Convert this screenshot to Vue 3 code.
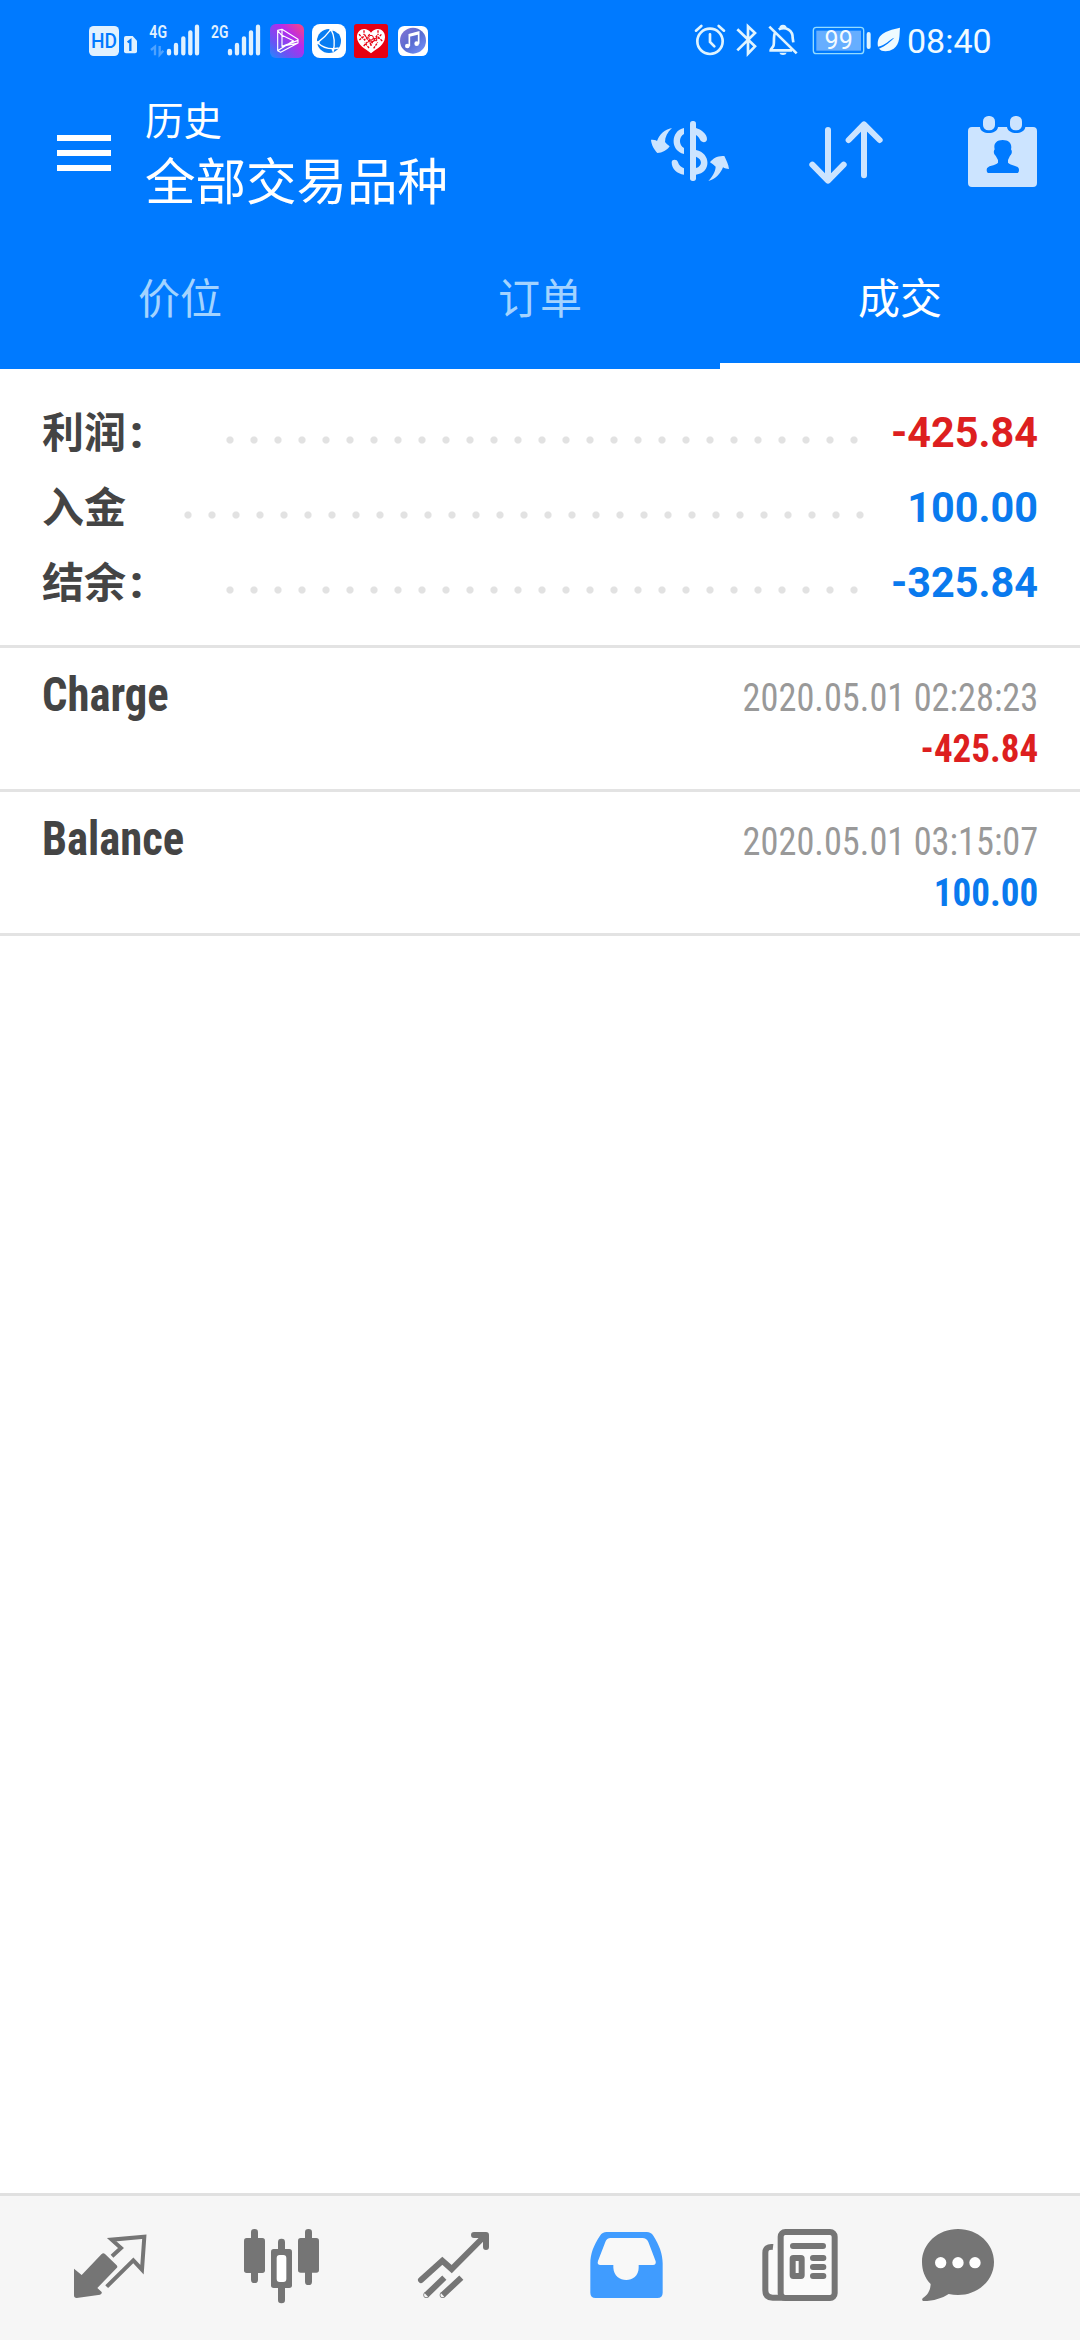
<script setup>
const tabs = [
  { label: '价位', active: false },
  { label: '订单', active: false },
  { label: '成交', active: true },
]
const summary = [
  { label: '利润', colon: true, value: '-425.84', tone: 'red', labelWidth: 176, dots: 27 },
  { label: '入金', colon: false, value: '100.00', tone: 'blue', labelWidth: 134, dots: 29 },
  { label: '结余', colon: true, value: '-325.84', tone: 'blue', labelWidth: 176, dots: 27 },
]
const deals = [
  { name: 'Charge', time: '2020.05.01 02:28:23', value: '-425.84', tone: 'red' },
  { name: 'Balance', time: '2020.05.01 03:15:07', value: '100.00', tone: 'blue' },
]
</script>

<template>
  <div class="screen">
    <header class="top">
      <div class="status">
        <div class="status-group">
          <svg width="70" height="80" viewBox="0 0 210 240">
            <rect x="57" y="78" width="90" height="90" rx="14" fill="#e0f1ff" />
            <text x="102" y="144" class="svg-text" font-size="60" font-weight="500" fill="#007aff" text-anchor="middle" textLength="78" lengthAdjust="spacingAndGlyphs">HD</text>
            <path d="M168 108h20l13 14v32q0 6-6 6h-27q-6 0-6-6v-40q0-6 6-6z" fill="#e0f1ff" />
            <path d="M173 127l8-6v32" stroke="#007aff" stroke-width="7" fill="none" />
          </svg>
          <svg width="65" height="80" viewBox="210 0 195 240">
            <text x="238" y="113" class="svg-text" font-size="54" font-weight="600" fill="#e0f1ff" textLength="53" lengthAdjust="spacingAndGlyphs">4G</text>
            <path d="M243 150l12-10v26M269 138v26l11-12" stroke="#4da2ff" stroke-width="7" fill="none" />
            <path d="M297 153v7M318 135v25M340 115v45M361 97v63M381 80v80" stroke="#e0f1ff" stroke-width="13" stroke-linecap="round" />
          </svg>
          <svg width="60" height="80" viewBox="405 0 180 240">
            <text x="423" y="113" class="svg-text" font-size="54" font-weight="600" fill="#e0f1ff" textLength="52" lengthAdjust="spacingAndGlyphs">2G</text>
            <path d="M480 153v7M501 135v25M522 115v45M543 97v63M564 80v80" stroke="#e0f1ff" stroke-width="13" stroke-linecap="round" />
          </svg>
          <svg width="43" height="80" viewBox="585 0 129 240">
            <defs>
              <linearGradient id="video" x1="0" y1="1" x2="1" y2="0">
                <stop offset="0" stop-color="#1e8cff" /><stop offset=".28" stop-color="#6755f4" />
                <stop offset=".65" stop-color="#b72bea" /><stop offset="1" stop-color="#ff467a" />
              </linearGradient>
            </defs>
            <rect x="600" y="72" width="102" height="102" rx="17" fill="url(#video)" />
            <path d="M623 91v61l9 5 52-28v-11l-48-30zM636 88v51l48-18M636 106l34 16-47 30M623 92l13 15M636 139l48-10" fill="none" stroke="#fff" stroke-width="3.5" stroke-linejoin="round" />
          </svg>
          <svg width="42" height="80" viewBox="714 0 126 240">
            <rect x="726" y="72" width="102" height="102" rx="24" fill="#fff" />
            <circle cx="777" cy="123" r="36" fill="#087df2" />
            <path d="M743 128Q764 113 783 88M743 128Q768 152 806 144M783 88Q799 118 789 156M806 100Q796 90 783 88" fill="none" stroke="#fff" stroke-width="4" />
            <g fill="#fff"><circle cx="744" cy="128" r="5" /><circle cx="783" cy="89" r="5" /><circle cx="789" cy="149" r="4" /></g>
          </svg>
          <svg width="43" height="80" viewBox="840 0 129 240">
            <rect x="852" y="72" width="102" height="102" rx="8" fill="#e60012" />
            <path d="M903 98C888 78 860 87 861 112C862 135 885 146 903 160C921 146 944 135 945 112C946 87 918 78 903 98z" fill="#fff" />
            <path d="M867 103l17 17 14-16 20 18 17-20M868 120l17-14 17 27 18-25 17 15M881 138l16-17 10 7 17-19M897 144l-13-16M911 145l12-18M882 91v14M924 91v14M903 111v30" fill="none" stroke="#e60012" stroke-width="4" stroke-dasharray="7 3" />
            <circle cx="903" cy="113" r="7" fill="#fff" stroke="#e60012" stroke-width="3" />
          </svg>
          <svg width="42" height="80" viewBox="969 0 126 240">
            <defs>
              <linearGradient id="music" x1="0" y1="0" x2="1" y2="1">
                <stop offset="0" stop-color="#8775d5" /><stop offset=".5" stop-color="#596bd0" /><stop offset="1" stop-color="#7796ff" />
              </linearGradient>
            </defs>
            <rect x="984" y="78" width="90" height="90" rx="19" fill="#fff" />
            <circle cx="1029" cy="122" r="39" fill="url(#music)" />
            <path d="M1018 139v-35l28-8v35M1018 108l28-7" fill="none" stroke="#fff" stroke-width="5" />
            <circle cx="1012" cy="138" r="7" fill="#fff" /><circle cx="1040" cy="131" r="7" fill="#fff" />
          </svg>
        </div>
        <div class="status-group">
          <svg width="40" height="80" viewBox="60 0 120 240" fill="none" stroke="#e0f4ff" stroke-linecap="round">
            <circle cx="120" cy="124" r="38" stroke-width="8" />
            <path d="M120 103v23l13 13" stroke-width="8" /><path d="M78 92l16-14M146 78l16 14" stroke-width="8" />
          </svg>
          <svg width="34" height="80" viewBox="180 0 102 240" fill="none" stroke="#e0f4ff" stroke-width="8">
            <path d="M202 88l53 51-21 22V79l21 20-53 52" />
          </svg>
          <svg width="41" height="80" viewBox="282 0 123 240" fill="none" stroke="#e0f4ff" stroke-width="8">
            <path d="M315 99c-5 8-2 28-4 36-1 7-9 10-9 16h64M326 88c22-11 43 4 42 26l2 13M332 85q0-7 7-7t7 7M298 80l82 80" />
            <path d="M328 158h22q-2 7-11 7t-11-7z" fill="#e0f4ff" stroke="none" />
          </svg>
          <svg width="69" height="80" viewBox="405 0 207 240">
            <rect x="430" y="82" width="151" height="79" rx="9" fill="none" stroke="#93dcff" stroke-width="4" />
            <rect x="439" y="92" width="134" height="60" fill="#66aeff" />
            <text x="506" y="146" class="svg-text" font-size="75" fill="#f4fbff" text-anchor="middle">99</text>
            <path d="M596 102v39" stroke="#e0f4ff" stroke-width="12" stroke-linecap="round" />
          </svg>
          <svg width="30" height="80" viewBox="612 0 90 240">
            <path d="M690 83c-32 8-73 14-66 57 23-4 34-22 49-27-12 11-26 25-46 33 8 10 29 10 44 0 20-14 17-41 19-63z" fill="#eefaff" />
          </svg>
          <span class="clock">08:40</span>
        </div>
      </div>

      <div class="bar">
        <svg class="menu" width="54" height="36" viewBox="0 0 54 36"><path d="M0 3h54M0 18h54M0 33h54" stroke="#fff" stroke-width="6" /></svg>
        <div class="titles">
          <div class="title">历史</div>
          <div class="subtitle">全部交易品种</div>
        </div>
        <div class="actions">
          <svg width="80" height="80" viewBox="60 60 240 240" fill="#cce4ff">
            <rect x="180" y="93" width="18" height="180" rx="8" />
            <path d="M162 114c-40 8-43 68 0 78v-18c-16-8-16-34 0-42zM125 217c0-10 17-10 19 0 2 8 10 15 18 18v19c-20-2-37-17-37-37z" />
            <path d="M198 114c15 4 34 18 33 34-1 12-16 10-20 3-3-7-7-13-13-16zM198 180c45 9 47 68 0 74v-20c20-6 20-26 0-34z" />
            <path d="M126 114c-14 13-21 27-21 42q6 8 14 13c-8 12-22 20-37 20-9-10-18-24-19-40 6 0 14 0 18 4 8-20 22-35 45-39zM240 217c8-12 24-21 43-19 5 12 13 25 14 39-6 0-13-1-18-5-7 18-20 34-44 41 12-13 21-27 22-43q-8-8-17-13z" />
          </svg>
          <svg width="80" height="80" viewBox="525 60 240 240" fill="none" stroke="#cce4ff" stroke-width="18" stroke-linecap="round" stroke-linejoin="round">
            <path d="M594 120v150M547 224l47 48 47-48M702 256V104M656 150l46-47 47 47" />
          </svg>
          <svg width="80" height="80" viewBox="990 60 240 240" fill="#cce4ff">
            <path d="M1026 111h24c1 24 51 24 54 0h27c3 24 52 24 55 0h23q12 0 12 12v156q0 12-12 12h-183q-12 0-12-12V123q0-12 12-12z" />
            <rect x="1059" y="78" width="36" height="43" rx="16" /><rect x="1140" y="78" width="36" height="43" rx="16" />
            <path d="M1118 150c20 0 29 12 25 28 5 6 2 15-3 19l-6 13v8c8 10 33 7 33 21 0 7-2 10-7 10h-83c-5 0-7-3-7-10 0-14 27-11 34-21v-8l-7-13c-5-4-8-13-3-19-4-16 4-28 24-28z" fill="#007aff" />
          </svg>
        </div>
      </div>

      <nav class="tabs">
        <div v-for="tab in tabs" :key="tab.label" class="tab" :class="{ active: tab.active }">{{ tab.label }}</div>
      </nav>
    </header>

    <main class="content">
      <section class="summary">
        <div v-for="row in summary" :key="row.label" class="sum-row">
          <span class="sum-label" :style="{ width: row.labelWidth + 'px' }">{{ row.label }}<span v-if="row.colon" class="colon">:</span></span>
          <span class="leader" :style="{ width: row.dots * 24 + 'px' }"></span>
          <span class="sum-value" :class="row.tone">{{ row.value }}</span>
        </div>
      </section>
      <section v-for="deal in deals" :key="deal.name" class="deal">
        <div class="deal-name">{{ deal.name }}</div>
        <div class="deal-side">
          <div class="deal-time">{{ deal.time }}</div>
          <div class="deal-value" :class="deal.tone">{{ deal.value }}</div>
        </div>
      </section>
    </main>

    <footer class="dock">
      <svg width="172" height="144" viewBox="-48 48 516 432">
        <path d="M102 266l23 19 60-63q5-5 10 0l35 34q4 4 0 8l-58 60 13 12q2 6-5 8l-70 10q-8 0-8-8z" fill="#757575" />
        <path d="M216 229l27-25-28-25 98-9-7 99-26-28-80 79" fill="none" stroke="#757575" stroke-width="12" />
      </svg>
      <svg width="172" height="144" viewBox="468 48 516 432" fill="#757575">
        <rect x="633" y="147" width="21" height="162" rx="10" /><rect x="612" y="174" width="63" height="105" rx="8" />
        <rect x="795" y="147" width="21" height="168" rx="10" /><rect x="774" y="174" width="63" height="104" rx="8" />
        <rect x="714" y="176" width="21" height="194" rx="10" /><rect x="693" y="207" width="63" height="117" rx="8" />
        <rect x="710" y="225" width="29" height="81" rx="9" fill="#fff" />
      </svg>
      <svg width="172" height="144" viewBox="-66 48 516 432" fill="none" stroke="#757575" stroke-width="18">
        <path d="M93 300l64-58 28 25L284 168" stroke-linecap="round" stroke-linejoin="miter" />
        <path d="M252 165h36v36" stroke-linecap="round" stroke-linejoin="round" />
        <path d="M109 345l54-52M158 345l56-52" /><circle cx="109" cy="345" r="1" stroke-width="16" /><circle cx="158" cy="345" r="1" stroke-width="16" />
      </svg>
      <svg width="172" height="144" viewBox="450 48 516 432">
        <path d="M650 156h120q13 0 20 11c18 28 28 55 28 83v88q0 16-16 16H617q-16 0-16-16v-88c0-28 10-55 29-83q7-11 20-11z" fill="#409cff" />
        <path d="M662 174h95q13 0 18 12l22 58q2 11-8 11h-43v8c0 49-74 49-76 0v-8h-38q-12 0-8-12l22-57q4-12 16-12z" fill="#f8f8f8" />
      </svg>
      <svg width="172" height="144" viewBox="-54 48 516 432">
        <rect x="114" y="204" width="30" height="141" rx="9" fill="#fafafa" />
        <path d="M129 201q-23-3-23 18v112q0 22 22 22h40" fill="none" stroke="#757575" stroke-width="18" />
        <rect x="152" y="156" width="162" height="198" rx="14" fill="#fafafa" stroke="#757575" stroke-width="18" />
        <path d="M189 198h90M249 234h31M249 261h31M249 288h31" stroke="#757575" stroke-width="18" stroke-linecap="round" />
        <rect x="188" y="234" width="27" height="54" rx="2" fill="#fafafa" stroke="#757575" stroke-width="18" stroke-linejoin="round" />
      </svg>
      <svg width="172" height="144" viewBox="462 48 516 432">
        <path d="M684 147c60 0 108 44 108 99s-48 99-108 99q-14 0-28-3c-20 13-44 21-76 21q-6-2-2-8c16-11 23-24 24-43-18-18-26-41-26-66 0-55 48-99 108-99z" fill="#757575" />
        <g fill="#fff"><circle cx="632" cy="248" r="17" /><circle cx="684" cy="248" r="17" /><circle cx="735" cy="248" r="17" /></g>
      </svg>
    </footer>
  </div>
</template>

<style>
body { background: #fff; }
</style>

<style scoped>
.screen {
  width: 1080px;
  height: 2340px;
  display: flex;
  flex-direction: column;
  background: #fff;
  font-family: Roboto, "Noto Sans CJK SC", sans-serif;
  overflow: hidden;
}
svg { display: block; flex: none; }
.svg-text { font-family: Roboto, sans-serif; }
.top { height: 369px; flex: none; background: #007aff; color: #fff; display: flex; flex-direction: column; }
.status { height: 80px; display: flex; justify-content: space-between; padding: 0 87px 0 70px; }
.status-group { display: flex; }
.clock { width: 86px; margin-left: 3px; font-size: 34px; line-height: 82px; color: #f0faff; white-space: nowrap; }
.bar { height: 150px; display: flex; padding: 0 40px 0 57px; }
.menu { margin-top: 55px; }
.titles { margin-left: 34px; padding-top: 11px; flex: 1; font-family: "Noto Sans CJK SC", sans-serif; }
.title { font-size: 38.5px; line-height: 54px; }
.subtitle { font-size: 50.5px; line-height: 66px; white-space: nowrap; }
.actions { display: flex; gap: 75px; padding-top: 30px; }
.tabs { flex: 1; display: flex; }
.tab {
  flex: 1;
  text-align: center;
  font: 42px/134px "Noto Sans CJK SC", sans-serif;
  color: #a3d3ff;
  border-bottom: 6px solid transparent;
  box-sizing: border-box;
}
.tab.active { color: #fff; border-bottom-color: #fff; }
.content { flex: 1; }
.summary { height: 250px; padding: 26px 42px 0; border-bottom: 3px solid #e3e3e3; }
.sum-row { height: 75px; display: flex; align-items: center; }
.sum-label { flex: none; margin-top: -6px; font: bold 42px/75px "Noto Sans CJK SC", sans-serif; color: #444; }
.colon { margin-left: 4px; font-family: Roboto, sans-serif; font-size: 44px; font-weight: 900; line-height: 1; }
.leader {
  flex: none;
  height: 8px;
  margin-top: 15px;
  background: radial-gradient(circle at center, #e2e2e2 3px, transparent 4.2px) 0 0 / 24px 8px repeat-x;
}
.sum-value {
  flex: 1;
  text-align: right;
  font-size: 42px;
  font-weight: 700;
  white-space: nowrap;
  transform: scaleX(0.985);
  transform-origin: right;
}
.red { color: #dd1f1f; }
.blue { color: #0a7aee; }
.deal { height: 141px; padding: 0 42px; display: flex; justify-content: space-between; border-bottom: 3px solid #e3e3e3; }
.deal-name,
.deal-side { font-family: "Roboto Condensed", Roboto, sans-serif; font-stretch: 75%; }
.deal-name {
  padding-top: 17px;
  font-size: 48px;
  font-weight: 700;
  line-height: 60px;
  color: #444;
  transform: scaleX(0.93);
  transform-origin: left;
}
.deal-side { padding-top: 25px; font-size: 39px; line-height: 51px; text-align: right; }
.deal-time { color: #999; transform: scaleX(0.932); transform-origin: right; }
.deal-value { font-weight: 700; transform: scaleX(0.95); transform-origin: right; }
.dock { height: 144px; flex: none; border-top: 3px solid #e0e0e0; background: #f6f6f6; display: flex; padding-left: 24px; }
</style>
